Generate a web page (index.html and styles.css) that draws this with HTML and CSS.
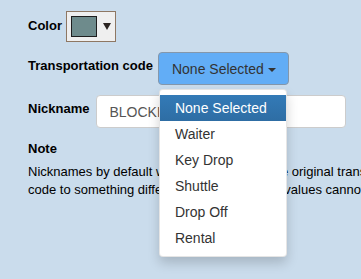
FILE: index.html
```html
<!DOCTYPE html>
<html lang="en">
<head>
    <meta charset="UTF-8">
    <meta name="viewport" content="width=device-width, initial-scale=1.0">
    <title>Transportation Settings</title>
    <link rel="stylesheet" href="styles.css">
</head>
<body>
    <div class="settings">
        <div class="form-row">
            <label class="form-label">Color</label>
            <div class="color-picker">
                <span class="color-swatch"></span>
                <span class="color-arrow"></span>
            </div>
        </div>

        <div class="form-row">
            <label class="form-label">Transportation code</label>
            <div class="select-group">
                <button class="select-button">None Selected <span class="caret"></span></button>
                <ul class="select-menu">
                    <li class="active">None Selected</li>
                    <li>Waiter</li>
                    <li>Key Drop</li>
                    <li>Shuttle</li>
                    <li>Drop Off</li>
                    <li>Rental</li>
                </ul>
            </div>
        </div>

        <div class="form-row">
            <label class="form-label">Nickname</label>
            <input type="text" class="text-input" value="BLOCKED">
        </div>

        <div class="note">
            <h4>Note</h4>
            <p>Nicknames by default will be the same as the original transportation code to something different, and the original values cannot be edited.</p>
        </div>
    </div>
</body>
</html>
```

FILE: styles.css
```css
* {
    margin: 0;
    padding: 0;
    box-sizing: border-box;
}

html {
    height: 100%;
    overflow: hidden;
}

body {
    min-height: 100%;
    font-family: 'Liberation Sans', Arial, sans-serif;
    font-size: 13px;
    line-height: 1.42857;
    color: #000;
    background-color: #cadcec;
}

.settings {
    width: 460px;
    padding: 11px 0 0 28px;
}

.form-row {
    display: flex;
    align-items: center;
    gap: 5px;
    margin-bottom: 10px;
}

.form-label {
    font-weight: bold;
    margin-bottom: 4px;
}

.form-row:first-child .form-label {
    margin-bottom: 0;
}

/* カラーピッカー */
.color-picker {
    width: 50px;
    height: 31px;
    margin-left: -1px;
    display: flex;
    align-items: center;
    gap: 6px;
    padding-left: 4px;
    border: 1px solid #8e7763;
    background-color: #efefef;
}

.color-swatch {
    width: 26px;
    height: 21px;
    border: 1px solid #1e1e1e;
    background-color: #6e8b8c;
}

.color-arrow {
    width: 0;
    height: 0;
    border-left: 4px solid transparent;
    border-right: 4px solid transparent;
    border-top: 7px solid #2a2320;
}

/* ドロップダウン */
.select-group {
    position: relative;
}

.select-button {
    height: 33px;
    padding: 0 12px 0 13px;
    font-family: inherit;
    font-size: 14px;
    color: #333;
    background-color: #62adf6;
    border: 1px solid #8497ab;
    border-radius: 4px;
    display: flex;
    align-items: center;
    gap: 4px;
    cursor: pointer;
}

.caret {
    width: 0;
    height: 0;
    margin-top: 2px;
    border-left: 4px solid transparent;
    border-right: 4px solid transparent;
    border-top: 4px solid #333;
}

.select-menu {
    position: absolute;
    top: 37px;
    left: 1px;
    width: 128px;
    padding: 5px 0;
    list-style: none;
    background-color: #fff;
    border: 1px solid rgba(0, 0, 0, 0.1);
    border-radius: 4px;
    box-shadow: 0 6px 12px rgba(0, 0, 0, 0.175);
    z-index: 10;
}

.select-menu li {
    padding: 3px 15px;
    font-size: 14px;
    line-height: 20px;
    color: #333;
    white-space: nowrap;
}

.select-menu li.active {
    color: #fff;
    background-image: linear-gradient(to bottom, #337ab7 0, #2e6da4 100%);
}

/* テキスト入力 */
.text-input {
    width: 250px;
    height: 33px;
    margin-left: 2px;
    padding: 0 12px;
    font-family: inherit;
    font-size: 14px;
    color: #555;
    background-color: #fff;
    border: 1px solid #ccc;
    border-radius: 4px;
    outline: none;
}

.note {
    padding-top: 2px;
}

.note h4 {
    font-size: 13px;
    margin-bottom: 4px;
}

.note p {
    width: 405px;
}
```
